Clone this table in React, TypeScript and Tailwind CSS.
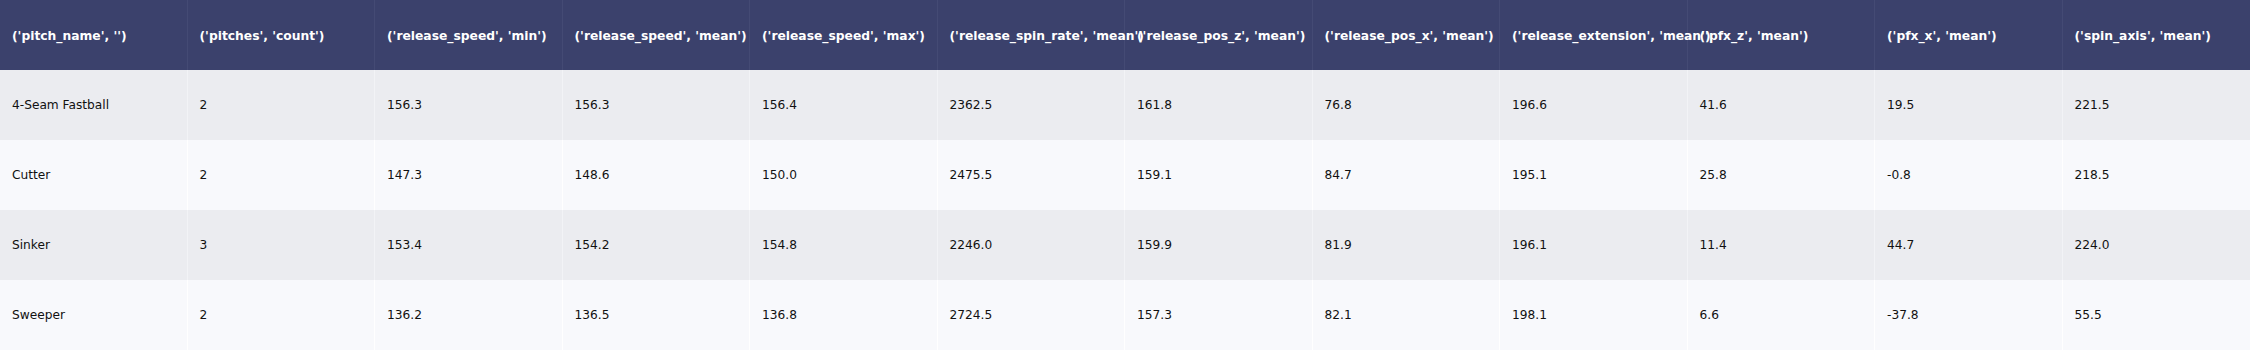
const columns = [
  "('pitch_name', '')",
  "('pitches', 'count')",
  "('release_speed', 'min')",
  "('release_speed', 'mean')",
  "('release_speed', 'max')",
  "('release_spin_rate', 'mean')",
  "('release_pos_z', 'mean')",
  "('release_pos_x', 'mean')",
  "('release_extension', 'mean')",
  "('pfx_z', 'mean')",
  "('pfx_x', 'mean')",
  "('spin_axis', 'mean')",
]

const rows = [
  ['4-Seam Fastball', '2', '156.3', '156.3', '156.4', '2362.5', '161.8', '76.8', '196.6', '41.6', '19.5', '221.5'],
  ['Cutter', '2', '147.3', '148.6', '150.0', '2475.5', '159.1', '84.7', '195.1', '25.8', '-0.8', '218.5'],
  ['Sinker', '3', '153.4', '154.2', '154.8', '2246.0', '159.9', '81.9', '196.1', '11.4', '44.7', '224.0'],
  ['Sweeper', '2', '136.2', '136.5', '136.8', '2724.5', '157.3', '82.1', '198.1', '6.6', '-37.8', '55.5'],
]

export default function App() {
  return (
    <div className="w-[2250px] h-[350px] overflow-hidden bg-white font-['DejaVu_Sans',Verdana,sans-serif] text-[12px]">
      <div className="grid grid-cols-12 h-[70px] bg-[#3b416c]">
        {columns.map((col) => (
          <div
            key={col}
            className="flex items-center px-3 pt-[2px] whitespace-nowrap font-bold text-[12.3px] text-white border-r border-[#444a74] last:border-r-0"
          >
            {col}
          </div>
        ))}
      </div>
      {rows.map((row, i) => (
        <div
          key={row[0]}
          className={`grid grid-cols-12 h-[70px] ${
            i % 2 === 0 ? 'bg-[#ebecf0]' : 'bg-[#f8f9fc]'
          }`}
        >
          {row.map((cell, j) => (
            <div
              key={j}
              className={`flex items-center px-3 whitespace-nowrap text-[12.2px] text-[#111111] border-r last:border-r-0 ${
                i % 2 === 0 ? 'border-[#f2f3f6]' : 'border-[#ffffff]'
              }`}
            >
              {cell}
            </div>
          ))}
        </div>
      ))}
    </div>
  )
}
